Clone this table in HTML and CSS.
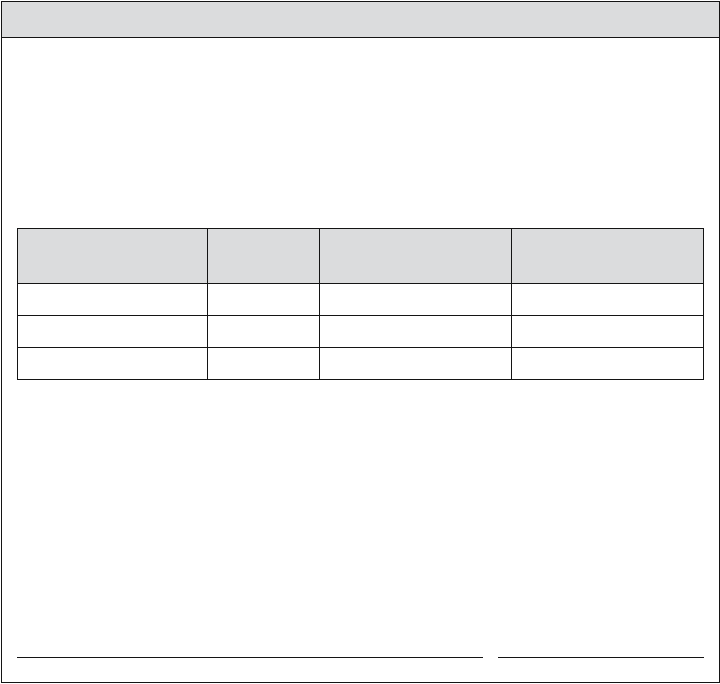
FILE: index.html
```html
<!DOCTYPE html>
<html lang="en">
<head>
    <meta charset="UTF-8">
    <meta name="viewport" content="width=device-width, initial-scale=1.0">
    <title>Form</title>
    <link rel="stylesheet" href="styles.css">
</head>
<body>
    <div id="sheet">
        <div class="sheet-header"></div>
        <div class="sheet-body">
            <table class="entries">
                <colgroup>
                    <col class="col-a">
                    <col class="col-b">
                    <col class="col-c">
                    <col class="col-d">
                </colgroup>
                <thead>
                    <tr>
                        <th></th>
                        <th></th>
                        <th></th>
                        <th></th>
                    </tr>
                </thead>
                <tbody>
                    <tr><td></td><td></td><td></td><td></td></tr>
                    <tr><td></td><td></td><td></td><td></td></tr>
                    <tr><td></td><td></td><td></td><td></td></tr>
                </tbody>
            </table>
        </div>
        <div class="signatures">
            <div class="sign-line"></div>
            <div class="sign-line date"></div>
        </div>
    </div>
</body>
</html>
```

FILE: styles.css
```css
body {
    margin: 0;
    background-color: #ffffff;
    font-family: "Liberation Sans", Arial, sans-serif;
}
#sheet {
    margin: 1px 0 0 1px;
    width: 719px;
    height: 682px;
    box-sizing: border-box;
    border: 1px solid #141414;
    display: flex;
    flex-direction: column;
}
.sheet-header {
    height: 35px;
    background-color: #dbdcdd;
    border-bottom: 1px solid #141414;
}
.sheet-body {
    flex: 1;
    padding: 190px 15px 0 15px;
}
.entries {
    border-collapse: separate;
    border-spacing: 0;
    table-layout: fixed;
    width: 687px;
    border-top: 1px solid #141414;
    border-left: 1px solid #141414;
}
.col-a { width: 190px; }
.col-b { width: 112px; }
.col-c { width: 192px; }
.col-d { width: 192px; }
.entries th,
.entries td {
    padding: 0;
    border-right: 1px solid #141414;
    border-bottom: 1px solid #141414;
    box-sizing: border-box;
}
.entries th {
    height: 55px;
    background-color: #dbdcdd;
}
.entries td {
    height: 32px;
}
.signatures {
    display: flex;
    gap: 15px;
    padding: 0 15px 24px 15px;
}
.sign-line {
    flex: 1;
    border-top: 1px solid #141414;
}
.sign-line.date {
    flex: none;
    width: 206px;
}
```
